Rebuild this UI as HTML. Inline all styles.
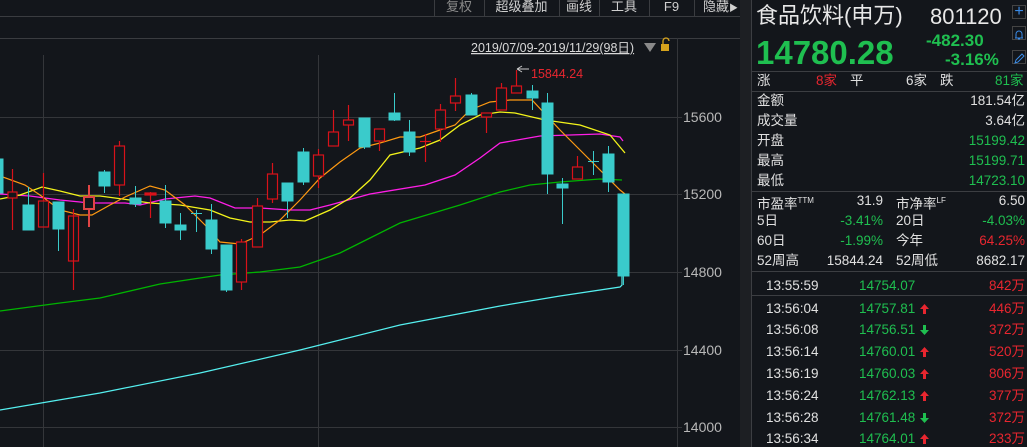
<!DOCTYPE html>
<html><head><meta charset="utf-8"><style>
*{margin:0;padding:0;box-sizing:border-box}
body{width:1027px;height:447px;background:#13161b;overflow:hidden;position:relative;font-family:"Liberation Sans","Noto Sans CJK SC",sans-serif;color:#d8d8d8}
.a{position:absolute;white-space:nowrap}
.tb{position:absolute;top:0;height:16px;font-size:13px;line-height:14px;color:#cfcfcf;text-align:center}
.sep{position:absolute;top:0;width:1px;height:16px;background:#3a3c40}
.r{position:absolute;font-size:13.5px;line-height:16px;white-space:nowrap}
.g{color:#1fbf50}.rd{color:#e8262f}.w{color:#e0e0e0}
.hl{position:absolute;left:752px;width:275px;height:1px;background:#3c3e42}
.ar{position:absolute;left:920px}
</style></head><body>
<div class="sep" style="left:434px"></div><div class="sep" style="left:484px"></div><div class="sep" style="left:559px"></div><div class="sep" style="left:599px"></div><div class="sep" style="left:649px"></div><div class="sep" style="left:694px"></div>
<div class="tb" style="left:434px;width:50px;color:#8a8a8a">复权</div>
<div class="tb" style="left:484px;width:75px">超级叠加</div>
<div class="tb" style="left:559px;width:40px">画线</div>
<div class="tb" style="left:599px;width:50px">工具</div>
<div class="tb" style="left:649px;width:45px">F9</div>
<div class="tb" style="left:694px;width:46px;text-align:left;padding-left:9px">隐藏<span style="font-size:9px">▶</span></div>
<div class="a" style="left:0;top:16px;width:740px;height:1px;background:#3a3c40"></div>
<div class="a" style="left:0;top:38px;width:740px;height:1px;background:#3a3c40"></div>
<div class="a" style="left:740px;top:0;width:12px;height:447px;background:#1d1f23"></div>
<div class="a" style="left:751px;top:0;width:1px;height:447px;background:#3c3e42"></div>
<svg class="a" style="left:0;top:0" width="740" height="447" xmlns="http://www.w3.org/2000/svg">
<g stroke="#34363a" stroke-width="1">
<line x1="0" y1="117.5" x2="677" y2="117.5"/><line x1="0" y1="194.5" x2="677" y2="194.5"/><line x1="0" y1="272.5" x2="677" y2="272.5"/><line x1="0" y1="350.5" x2="677" y2="350.5"/><line x1="0" y1="427.5" x2="677" y2="427.5"/>
<line x1="43.5" y1="55" x2="43.5" y2="447"/><line x1="318.5" y1="55" x2="318.5" y2="447"/><line x1="677.5" y1="38" x2="677.5" y2="447"/>
<line x1="677" y1="117.5" x2="682" y2="117.5"/><line x1="677" y1="194.5" x2="682" y2="194.5"/><line x1="677" y1="272.5" x2="682" y2="272.5"/><line x1="677" y1="350.5" x2="682" y2="350.5"/><line x1="677" y1="427.5" x2="682" y2="427.5"/>
</g>
<g font-size="14" fill="#b8b8b8" font-family="Liberation Sans,sans-serif">
<text x="683" y="122">15600</text><text x="683" y="199">15200</text><text x="683" y="277">14800</text><text x="683" y="355">14400</text><text x="683" y="432">14000</text>
</g>
<text x="471" y="52" font-size="12.5" fill="#d8d8d8" text-decoration="underline" font-family="Liberation Sans,Noto Sans CJK SC,sans-serif">2019/07/09-2019/11/29(98日)</text>
<polygon points="644,43 656,43 650,52" fill="#8a8a8a"/>
<rect x="661" y="44" width="8" height="7" fill="#d6a31c"/><path d="M663 44 v-3 a3 3 0 0 1 6 0" stroke="#d6a31c" fill="none" stroke-width="1.3"/>
<polyline fill="none" stroke="#55f0f0" stroke-width="1.2" points="0,410 100,393 200,373 300,350 400,325 500,306 560,296 620,287 622,285 622,276"/>
<polyline fill="none" stroke="#00b400" stroke-width="1.3" points="0,311 60,303 100,298 160,284 220,275 260,272 300,267 340,253 370,238 400,223 460,205 500,192 530,185 560,182 600,179 622,180"/>
<polyline fill="none" stroke="#ff1ee6" stroke-width="1.3" points="0,194 30,196 60,200 90,203 125,203 140,205 165,199 195,196 210,198 235,208 260,208 290,210 310,210 330,205 370,194 425,185 455,175 480,158 500,143 540,136 600,134 620,137 623,141"/>
<polyline fill="none" stroke="#f4f41a" stroke-width="1.3" points="0,199 20,195 42,187 60,191 80,196 100,196 130,200 150,203 180,205 210,210 230,218 250,222 270,222 290,220 305,221 330,210 350,198 370,180 390,155 420,148 440,140 460,125 480,115 500,112 515,113 545,120 580,125 610,135 625,153"/>
<polyline fill="none" stroke="#ff9a12" stroke-width="1.2" points="0,176 25,185 40,195 60,210 80,215 92,215 110,205 125,197 150,186 165,190 185,205 205,225 220,242 240,244 260,235 280,220 300,200 320,178 340,162 360,148 380,143 400,137 420,137 440,130 455,125 470,110 490,102 510,100 532,100 560,130 590,160 620,190 625,194"/>
<g fill="#3acbcb" stroke="#3acbcb" stroke-width="1">
<rect x="0" y="159" width="3" height="34"/>
<line x1="28.5" y1="187" x2="28.5" y2="205"/><rect x="23" y="205" width="11" height="25"/>
<line x1="58.5" y1="229" x2="58.5" y2="251"/><rect x="53" y="202" width="11" height="27"/>
<line x1="104.5" y1="170" x2="104.5" y2="193"/><rect x="99" y="172" width="11" height="14"/>
<line x1="135.5" y1="186" x2="135.5" y2="207"/><rect x="130" y="198" width="11" height="6"/>
<line x1="165.5" y1="185" x2="165.5" y2="228"/><rect x="160" y="201" width="11" height="22"/>
<line x1="180.5" y1="213" x2="180.5" y2="240"/><rect x="175" y="225" width="11" height="5"/>
<line x1="196.5" y1="210" x2="196.5" y2="232"/><line x1="191" y1="213.5" x2="202" y2="213.5"/>
<line x1="211.5" y1="204" x2="211.5" y2="254"/><rect x="206" y="220" width="11" height="29"/>
<line x1="226.5" y1="245" x2="226.5" y2="292"/><rect x="221" y="245" width="11" height="45"/>
<line x1="287.5" y1="201" x2="287.5" y2="218"/><rect x="282" y="183" width="11" height="18"/>
<line x1="303.5" y1="148" x2="303.5" y2="185"/><rect x="298" y="152" width="11" height="30"/>
<line x1="364.5" y1="147" x2="364.5" y2="149"/><rect x="359" y="118" width="11" height="29"/>
<line x1="394.5" y1="93" x2="394.5" y2="121"/><rect x="389" y="113" width="11" height="7"/>
<line x1="409.5" y1="120" x2="409.5" y2="156"/><rect x="404" y="132" width="11" height="20"/>
<line x1="471.5" y1="93" x2="471.5" y2="95"/><rect x="466" y="95" width="11" height="20"/>
<line x1="532.5" y1="85" x2="532.5" y2="110"/><rect x="527" y="91" width="11" height="7"/>
<line x1="547.5" y1="93" x2="547.5" y2="194"/><rect x="542" y="103" width="11" height="71"/>
<line x1="562.5" y1="178" x2="562.5" y2="224"/><rect x="557" y="184" width="11" height="4"/>
<line x1="593.5" y1="151" x2="593.5" y2="175"/><line x1="588" y1="161.5" x2="599" y2="161.5"/>
<line x1="608.5" y1="146" x2="608.5" y2="192"/><rect x="603" y="154" width="11" height="28"/>
<line x1="623.5" y1="276" x2="623.5" y2="285"/><rect x="618" y="194" width="11" height="82"/>
</g>
<g fill="none" stroke="#d8121a" stroke-width="1.2">
<line x1="12.5" y1="169" x2="12.5" y2="230"/><rect x="8" y="192" width="9" height="6" fill="#13161b"/>
<line x1="43.5" y1="173" x2="43.5" y2="201"/><rect x="38.5" y="201" width="10" height="26"/>
<line x1="73.5" y1="209" x2="73.5" y2="290"/><rect x="68.5" y="216" width="10" height="45"/>
<line x1="89" y1="185" x2="89" y2="227" stroke="#e04545" stroke-width="2"/><rect x="84" y="197" width="10" height="12" stroke="#e04545" stroke-width="2" fill="#13161b"/>
<line x1="119.5" y1="141" x2="119.5" y2="196"/><rect x="114.5" y="146" width="10" height="39" fill="#13161b"/>
<line x1="150.5" y1="192" x2="150.5" y2="218"/><rect x="145" y="193" width="11" height="2" fill="#d8121a"/>
<line x1="241.5" y1="239" x2="241.5" y2="290"/><rect x="236.5" y="242" width="10" height="40" fill="#13161b"/>
<line x1="257.5" y1="198" x2="257.5" y2="206"/><rect x="252.5" y="206" width="10" height="41" fill="#13161b"/>
<line x1="272.5" y1="163" x2="272.5" y2="203"/><rect x="267.5" y="174" width="10" height="25" fill="#13161b"/>
<line x1="318.5" y1="149" x2="318.5" y2="188"/><rect x="313.5" y="155" width="10" height="21" fill="#13161b"/>
<line x1="333.5" y1="110" x2="333.5" y2="132"/><rect x="328.5" y="132" width="10" height="14" fill="#13161b"/>
<line x1="348.5" y1="105" x2="348.5" y2="141"/><rect x="343.5" y="120" width="10" height="5" fill="#13161b"/>
<line x1="379.5" y1="129" x2="379.5" y2="151"/><rect x="374.5" y="129" width="10" height="12" fill="#13161b"/>
<line x1="425.5" y1="134" x2="425.5" y2="162"/><line x1="420" y1="141.5" x2="431" y2="141.5"/>
<line x1="440.5" y1="104" x2="440.5" y2="142"/><rect x="435.5" y="110" width="10" height="19" fill="#13161b"/>
<line x1="455.5" y1="78" x2="455.5" y2="111"/><rect x="450.5" y="96" width="10" height="7" fill="#13161b"/>
<line x1="486.5" y1="113" x2="486.5" y2="133"/><rect x="481.5" y="113" width="10" height="4" fill="#13161b"/>
<line x1="501.5" y1="83" x2="501.5" y2="110"/><rect x="496.5" y="88" width="10" height="22" fill="#13161b"/>
<line x1="516.5" y1="70" x2="516.5" y2="86"/><rect x="511.5" y="86" width="10" height="7" fill="#13161b"/>
<line x1="577.5" y1="156" x2="577.5" y2="167"/><rect x="572.5" y="167" width="10" height="12" fill="#13161b"/>
</g>
<path d="M517 69 l5 -3 m-5 3 l5 3 m-5 -3 h12" stroke="#ccc" stroke-width="1" fill="none"/>
<text x="531" y="78" font-size="12.5" fill="#e8262f" font-family="Liberation Sans,sans-serif">15844.24</text>
</svg>
<div class="a" style="left:756px;top:3px;font-size:22px;line-height:26px;color:#e8e8e8">食品饮料(申万)</div>
<div class="a" style="left:930px;top:4px;font-size:22px;line-height:26px;color:#e8e8e8">801120</div>
<div class="a" style="left:1012px;top:5px;width:14px;height:14px;border:1px solid #444;color:#3b8ce8;font-size:16px;line-height:12px;text-align:center">+</div>
<div class="a" style="left:1012px;top:26px;width:14px;height:14px;border:1px solid #444"><svg width="12" height="12"><path d="M2 10 h8 M3 10 v-4 a3 3 0 0 1 6 0 v4 M5 11 h2" stroke="#3b8ce8" fill="none"/></svg></div>
<div class="a" style="left:1012px;top:50px;width:14px;height:14px;border:1px solid #444"><svg width="12" height="12"><path d="M2 11 l1-3 6-6 2 2 -6 6z" stroke="#3b8ce8" fill="none"/></svg></div>
<div class="a g" style="left:756px;top:34px;font-size:33px;line-height:38px;font-weight:bold">14780.28</div>
<div class="a g" style="left:926px;top:31px;font-size:17px;line-height:20px;font-weight:bold">-482.30</div>
<div class="a g" style="left:945px;top:50px;font-size:17px;line-height:20px;font-weight:bold">-3.16%</div>
<div class="hl" style="top:71px"></div>
<div class="r w" style="left:757px;top:73px">涨</div><div class="r rd" style="left:816px;top:73px">8家</div><div class="r w" style="left:850px;top:73px">平</div><div class="r w" style="left:906px;top:73px">6家</div><div class="r w" style="left:940px;top:73px">跌</div><div class="r g" style="left:995px;top:73px">81家</div>
<div class="hl" style="top:91px"></div>
<div class="r w" style="left:757px;top:93px">金额</div><div class="r w" style="right:2px;top:93px">181.54亿</div>
<div class="r w" style="left:757px;top:113px">成交量</div><div class="r w" style="right:2px;top:113px">3.64亿</div>
<div class="r w" style="left:757px;top:133px">开盘</div><div class="r g" style="right:2px;top:133px">15199.42</div>
<div class="r w" style="left:757px;top:153px">最高</div><div class="r g" style="right:2px;top:153px">15199.71</div>
<div class="r w" style="left:757px;top:173px">最低</div><div class="r g" style="right:2px;top:173px">14723.10</div>
<div class="hl" style="top:191px"></div>
<div class="r w" style="left:757px;top:193px">市盈率<sup style="font-size:8px">TTM</sup></div><div class="r w" style="right:144px;top:193px">31.9</div><div class="r w" style="left:896px;top:193px">市净率<sup style="font-size:8px">LF</sup></div><div class="r w" style="right:2px;top:193px">6.50</div>
<div class="r w" style="left:757px;top:213px">5日</div><div class="r g" style="right:144px;top:213px">-3.41%</div><div class="r w" style="left:896px;top:213px">20日</div><div class="r g" style="right:2px;top:213px">-4.03%</div>
<div class="r w" style="left:757px;top:233px">60日</div><div class="r g" style="right:144px;top:233px">-1.99%</div><div class="r w" style="left:896px;top:233px">今年</div><div class="r rd" style="right:2px;top:233px">64.25%</div>
<div class="r w" style="left:757px;top:253px">52周高</div><div class="r w" style="right:144px;top:253px">15844.24</div><div class="r w" style="left:896px;top:253px">52周低</div><div class="r w" style="right:2px;top:253px">8682.17</div>
<div class="hl" style="top:271px"></div>
<div class="r w" style="left:766px;top:278px">13:55:59</div><div class="r g" style="left:859px;top:278px">14754.07</div><div class="r rd" style="right:2px;top:278px">842万</div>
<div class="hl" style="top:295px"></div>
<div class="r w" style="left:766px;top:301px">13:56:04</div><div class="r g" style="left:859px;top:301px">14757.81</div><svg class="ar" style="top:304px" width="9" height="10"><path d="M4.5 0 L9 5 H6 V10 H3 V5 H0Z" fill="#e8262f"/></svg><div class="r rd" style="right:2px;top:301px">446万</div>
<div class="r w" style="left:766px;top:322px">13:56:08</div><div class="r g" style="left:859px;top:322px">14756.51</div><svg class="ar" style="top:325px" width="9" height="10"><path d="M4.5 10 L9 5 H6 V0 H3 V5 H0Z" fill="#1fbf50"/></svg><div class="r rd" style="right:2px;top:322px">372万</div>
<div class="r w" style="left:766px;top:344px">13:56:14</div><div class="r g" style="left:859px;top:344px">14760.01</div><svg class="ar" style="top:347px" width="9" height="10"><path d="M4.5 0 L9 5 H6 V10 H3 V5 H0Z" fill="#e8262f"/></svg><div class="r rd" style="right:2px;top:344px">520万</div>
<div class="r w" style="left:766px;top:366px">13:56:19</div><div class="r g" style="left:859px;top:366px">14760.03</div><svg class="ar" style="top:369px" width="9" height="10"><path d="M4.5 0 L9 5 H6 V10 H3 V5 H0Z" fill="#e8262f"/></svg><div class="r rd" style="right:2px;top:366px">806万</div>
<div class="r w" style="left:766px;top:388px">13:56:24</div><div class="r g" style="left:859px;top:388px">14762.13</div><svg class="ar" style="top:391px" width="9" height="10"><path d="M4.5 0 L9 5 H6 V10 H3 V5 H0Z" fill="#e8262f"/></svg><div class="r rd" style="right:2px;top:388px">377万</div>
<div class="r w" style="left:766px;top:410px">13:56:28</div><div class="r g" style="left:859px;top:410px">14761.48</div><svg class="ar" style="top:413px" width="9" height="10"><path d="M4.5 10 L9 5 H6 V0 H3 V5 H0Z" fill="#1fbf50"/></svg><div class="r rd" style="right:2px;top:410px">372万</div>
<div class="r w" style="left:766px;top:431px">13:56:34</div><div class="r g" style="left:859px;top:431px">14764.01</div><svg class="ar" style="top:434px" width="9" height="10"><path d="M4.5 0 L9 5 H6 V10 H3 V5 H0Z" fill="#e8262f"/></svg><div class="r rd" style="right:2px;top:431px">233万</div>
</body></html>
